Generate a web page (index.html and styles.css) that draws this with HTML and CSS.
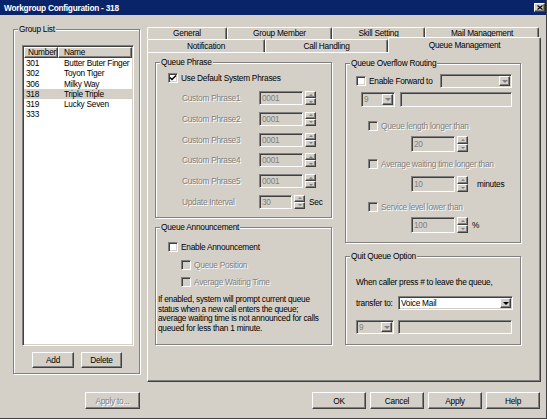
FILE: index.html
```html
<!DOCTYPE html>
<html lang="en">
<head>
    <meta charset="UTF-8">
    <title>Workgroup Configuration - 318</title>
    <link rel="stylesheet" href="styles.css">
</head>
<body>

<div class="window">
    <div class="titlebar">
        <span class="title">Workgroup Configuration - 318</span>
        <span class="close-btn">
            <svg width="6" height="5" viewBox="0 0 6 5"><path d="M0.5 0.5 L5.5 4.5 M5.5 0.5 L0.5 4.5" stroke="#000" stroke-width="1.2"/></svg>
        </span>
    </div>

    <div class="main">
        <!-- left: group list -->
        <div class="group group-list">
            <span class="group-title">Group List</span>
            <div class="listview">
                <div class="lv-header">
                    <span class="lv-head-cell lv-head-num">Number</span>
                    <span class="lv-head-cell lv-head-name">Name</span>
                </div>
                <div class="lv-row"><span class="lv-num">301</span><span class="lv-name">Butter Buter Finger</span></div>
                <div class="lv-row"><span class="lv-num">302</span><span class="lv-name">Toyon Tiger</span></div>
                <div class="lv-row"><span class="lv-num">306</span><span class="lv-name">Milky Way</span></div>
                <div class="lv-row selected"><span class="lv-num">318</span><span class="lv-name">Triple Triple</span></div>
                <div class="lv-row"><span class="lv-num">319</span><span class="lv-name">Lucky Seven</span></div>
                <div class="lv-row"><span class="lv-num">333</span><span class="lv-name"></span></div>
            </div>
            <div class="list-buttons">
                <span class="btn btn-add">Add</span>
                <span class="btn btn-delete">Delete</span>
            </div>
        </div>

        <!-- right: tabs -->
        <div class="tabs">
            <div class="tab-row tab-row-back">
                <span class="tab tab-general">General</span>
                <span class="tab tab-member">Group Member</span>
                <span class="tab tab-skill">Skill Setting</span>
                <span class="tab tab-mail">Mail Management</span>
            </div>
            <div class="tab-row tab-row-front">
                <span class="tab tab-notify">Notification</span>
                <span class="tab tab-call">Call Handling</span>
                <span class="tab tab-active">Queue Management</span>
            </div>

            <div class="panel">
                <div class="panel-col col-left">
                    <div class="group queue-phrase">
                        <span class="group-title">Queue Phrase</span>
                        <div class="check-row">
                            <span class="check"><svg width="8" height="8" viewBox="0 0 8 8"><path d="M1 3.5 L3 5.5 L7 1.5" fill="none" stroke="#000" stroke-width="1.5"/></svg></span>
                            <span>Use Default System Phrases</span>
                        </div>
                        <div class="field-row first">
                            <span class="field-label off">Custom Phrase1</span>
                            <span class="textbox disabled tb-phrase">0001</span>
                            <span class="spin"><span class="spin-btn"><i class="arrow-up"></i></span><span class="spin-btn"><i class="arrow-down"></i></span></span>
                        </div>
                        <div class="field-row">
                            <span class="field-label off">Custom Phrase2</span>
                            <span class="textbox disabled tb-phrase">0001</span>
                            <span class="spin"><span class="spin-btn"><i class="arrow-up"></i></span><span class="spin-btn"><i class="arrow-down"></i></span></span>
                        </div>
                        <div class="field-row">
                            <span class="field-label off">Custom Phrase3</span>
                            <span class="textbox disabled tb-phrase">0001</span>
                            <span class="spin"><span class="spin-btn"><i class="arrow-up"></i></span><span class="spin-btn"><i class="arrow-down"></i></span></span>
                        </div>
                        <div class="field-row">
                            <span class="field-label off">Custom Phrase4</span>
                            <span class="textbox disabled tb-phrase">0001</span>
                            <span class="spin"><span class="spin-btn"><i class="arrow-up"></i></span><span class="spin-btn"><i class="arrow-down"></i></span></span>
                        </div>
                        <div class="field-row">
                            <span class="field-label off">Custom Phrase5</span>
                            <span class="textbox disabled tb-phrase">0001</span>
                            <span class="spin"><span class="spin-btn"><i class="arrow-up"></i></span><span class="spin-btn"><i class="arrow-down"></i></span></span>
                        </div>
                        <div class="field-row">
                            <span class="field-label off">Update Interval</span>
                            <span class="textbox disabled tb-interval">30</span>
                            <span class="spin"><span class="spin-btn"><i class="arrow-up"></i></span><span class="spin-btn"><i class="arrow-down"></i></span></span>
                            <span class="unit-sec">Sec</span>
                        </div>
                    </div>

                    <div class="group queue-announce">
                        <span class="group-title">Queue Announcement</span>
                        <div class="check-row announce-main">
                            <span class="check"></span>
                            <span>Enable Announcement</span>
                        </div>
                        <div class="check-row announce-sub">
                            <span class="check disabled"></span>
                            <span class="off">Queue Position</span>
                        </div>
                        <div class="check-row announce-sub">
                            <span class="check disabled"></span>
                            <span class="off">Average Waiting Time</span>
                        </div>
                        <p class="announce-note">If enabled, system will prompt current queue<br>status when a new call enters the queue;<br>average waiting time is not announced for calls<br>queued for less than 1 minute.</p>
                    </div>
                </div>

                <div class="panel-col col-right">
                    <div class="group queue-overflow">
                        <span class="group-title">Queue Overflow Routing</span>
                        <div class="fwd-row">
                            <div class="check-row fwd-check">
                                <span class="check"></span>
                                <span>Enable Forward to</span>
                            </div>
                            <span class="dropdown disabled dd-forward">
                                <span class="dropdown-text"></span>
                                <span class="dropdown-btn"><i class="arrow-down-big"></i></span>
                            </span>
                        </div>
                        <div class="ext-row">
                            <span class="dropdown disabled dd-nine">
                                <span class="dropdown-text">9</span>
                                <span class="dropdown-btn"><i class="arrow-down-big"></i></span>
                            </span>
                            <span class="textbox disabled tb-ext"></span>
                        </div>

                        <div class="check-row overflow-check cb-length">
                            <span class="check disabled"></span>
                            <span class="off">Queue length longer than</span>
                        </div>
                        <div class="spin-row sr-length">
                            <span class="textbox disabled tb-limit">20</span>
                            <span class="spin tall"><span class="spin-btn"><i class="arrow-up"></i></span><span class="spin-btn"><i class="arrow-down"></i></span></span>
                        </div>

                        <div class="check-row overflow-check cb-wait">
                            <span class="check disabled"></span>
                            <span class="off">Average waiting time longer than</span>
                        </div>
                        <div class="spin-row sr-wait">
                            <span class="textbox disabled tb-limit">10</span>
                            <span class="spin tall"><span class="spin-btn"><i class="arrow-up"></i></span><span class="spin-btn"><i class="arrow-down"></i></span></span>
                            <span class="unit-minutes">minutes</span>
                        </div>

                        <div class="check-row overflow-check cb-service">
                            <span class="check disabled"></span>
                            <span class="off">Service level lower than</span>
                        </div>
                        <div class="spin-row sr-service">
                            <span class="textbox disabled tb-limit">100</span>
                            <span class="spin tall"><span class="spin-btn"><i class="arrow-up"></i></span><span class="spin-btn"><i class="arrow-down"></i></span></span>
                            <span class="unit-pct">%</span>
                        </div>
                    </div>

                    <div class="group quit-queue">
                        <span class="group-title">Quit Queue Option</span>
                        <div class="quit-text">When caller press # to leave the queue,</div>
                        <div class="transfer-row">
                            <span class="transfer-label">transfer to:</span>
                            <span class="dropdown dd-transfer">
                                <span class="dropdown-text">Voice Mail</span>
                                <span class="dropdown-btn"><i class="arrow-down-big"></i></span>
                            </span>
                        </div>
                        <div class="quit-ext-row">
                            <span class="dropdown disabled dd-quit-nine">
                                <span class="dropdown-text">9</span>
                                <span class="dropdown-btn"><i class="arrow-down-big"></i></span>
                            </span>
                            <span class="textbox disabled tb-quit-ext"></span>
                        </div>
                    </div>
                </div>
            </div>
        </div>
    </div>

    <div class="footer">
        <span class="btn btn-apply-to off">Apply to...</span>
        <div class="footer-right">
            <span class="btn btn-dialog">OK</span>
            <span class="btn btn-dialog">Cancel</span>
            <span class="btn btn-dialog">Apply</span>
            <span class="btn btn-dialog">Help</span>
        </div>
    </div>
</div>

</body>
</html>
```

FILE: styles.css
```css
body {
    margin: 0;
    background-color: #d4d0c8;
    font-family: "Liberation Sans", Arial, sans-serif;
    font-size: 8.3px;
    letter-spacing: -0.25px;
    line-height: 10px;
    color: #000;
}

.window {
    width: 547px;
    height: 419px;
    box-sizing: border-box;
    background-color: #d4d0c8;
    border-right: 1px solid #404040;
    border-bottom: 1px solid #404040;
}

/* title bar */
.titlebar {
    height: 15px;
    background-color: #0a246a;
    color: #fff;
    font-weight: bold;
    display: flex;
    align-items: center;
    justify-content: space-between;
    padding: 0 1px 0 4px;
}

.close-btn {
    width: 11px;
    height: 9px;
    box-sizing: border-box;
    background-color: #d4d0c8;
    border: 1px solid;
    border-color: #fff #404040 #404040 #fff;
    box-shadow: inset -1px -1px 0 #808080;
    display: flex;
    align-items: center;
    justify-content: center;
}

.main {
    display: flex;
    height: 367px;
}

/* common 3d pieces */
.group {
    position: relative;
    box-sizing: border-box;
    border: 1px solid #808080;
    box-shadow: 1px 1px 0 #fff, inset 1px 1px 0 #fff;
}

.group-title {
    position: absolute;
    top: -6px;
    left: 4px;
    padding: 0 1px;
    background-color: #d4d0c8;
    line-height: 10px;
    white-space: nowrap;
}

.btn {
    box-sizing: border-box;
    height: 16px;
    display: flex;
    align-items: center;
    justify-content: center;
    background-color: #d4d0c8;
    border: 1px solid;
    border-color: #fff #404040 #404040 #fff;
    box-shadow: inset -1px -1px 0 #808080;
}

.off {
    color: #808080;
    text-shadow: 1px 1px 0 #fff;
}

.textbox {
    display: block;
    box-sizing: border-box;
    height: 14px;
    padding-left: 2px;
    line-height: 12px;
    background-color: #fff;
    border: 1px solid;
    border-color: #808080 #fff #fff #808080;
    box-shadow: inset 1px 1px 0 #404040, inset -1px -1px 0 #d4d0c8;
}

.textbox.disabled {
    background-color: #d4d0c8;
    color: #808080;
}

.check {
    width: 10px;
    height: 10px;
    flex: none;
    box-sizing: border-box;
    background-color: #fff;
    border: 1px solid;
    border-color: #808080 #fff #fff #808080;
    box-shadow: inset 1px 1px 0 #404040, inset -1px -1px 0 #d4d0c8;
    display: flex;
    align-items: center;
    justify-content: center;
}

.check.disabled {
    background-color: #d4d0c8;
}

.check-row {
    display: flex;
    align-items: center;
    gap: 3px;
    height: 10px;
    white-space: nowrap;
}

.spin {
    display: flex;
    flex-direction: column;
    width: 11px;
    height: 14px;
    margin-left: 2px;
    flex: none;
}

.spin.tall {
    height: 16px;
}

.spin-btn {
    flex: 1;
    box-sizing: border-box;
    background-color: #d4d0c8;
    border: 1px solid;
    border-color: #fff #404040 #404040 #fff;
    box-shadow: inset -1px -1px 0 #808080;
    display: flex;
    align-items: center;
    justify-content: center;
}

.arrow-up {
    width: 0;
    height: 0;
    border-left: 2px solid transparent;
    border-right: 2px solid transparent;
    border-bottom: 2px solid #808080;
}

.arrow-down {
    width: 0;
    height: 0;
    border-left: 2px solid transparent;
    border-right: 2px solid transparent;
    border-top: 2px solid #808080;
}

.dropdown {
    display: flex;
    box-sizing: border-box;
    height: 14px;
    padding: 1px;
    background-color: #fff;
    border: 1px solid;
    border-color: #808080 #fff #fff #808080;
    box-shadow: inset 1px 1px 0 #404040, inset -1px -1px 0 #d4d0c8;
}

.dropdown.disabled {
    background-color: #d4d0c8;
    color: #808080;
}

.dropdown-text {
    flex: 1;
    padding-left: 1px;
    line-height: 10px;
    white-space: nowrap;
}

.dropdown-btn {
    width: 11px;
    box-sizing: border-box;
    background-color: #d4d0c8;
    border: 1px solid;
    border-color: #fff #404040 #404040 #fff;
    box-shadow: inset -1px -1px 0 #808080;
    display: flex;
    align-items: center;
    justify-content: center;
}

.arrow-down-big {
    width: 0;
    height: 0;
    border-left: 3px solid transparent;
    border-right: 3px solid transparent;
    border-top: 3px solid #000;
}

.dropdown.disabled .arrow-down-big {
    border-top-color: #808080;
}

/* group list */
.group-list {
    width: 127px;
    height: 345px;
    margin: 14px 0 0 13px;
    padding: 15px 0 0 8px;
}

.listview {
    width: 112px;
    height: 301px;
    box-sizing: border-box;
    padding: 1px;
    background-color: #fff;
    border: 1px solid;
    border-color: #808080 #fff #fff #808080;
    box-shadow: inset 1px 1px 0 #404040, inset -1px -1px 0 #d4d0c8;
    overflow: hidden;
}

.lv-header {
    display: flex;
    height: 11px;
}

.lv-head-cell {
    box-sizing: border-box;
    background-color: #d4d0c8;
    border-top: 1px solid #fff;
    border-left: 1px solid #fff;
    border-right: 1px solid #404040;
    border-bottom: 1px solid #404040;
    box-shadow: inset -1px -1px 0 #808080;
    line-height: 9px;
    white-space: nowrap;
    overflow: hidden;
}

.lv-head-num {
    width: 34px;
    padding-left: 3px;
}

.lv-head-name {
    flex: 1;
    padding-left: 5px;
}

.lv-row {
    display: flex;
    height: 10.3px;
    line-height: 10.3px;
    white-space: nowrap;
}

.lv-row.selected {
    background-color: #d4d0c8;
}

.lv-num {
    width: 34px;
    flex: none;
    box-sizing: border-box;
    padding-left: 2px;
}

.lv-name {
    padding-left: 6px;
}

.list-buttons {
    display: flex;
    gap: 7px;
    margin: 6px 0 0 10px;
}

.btn-add {
    width: 42px;
}

.btn-delete {
    width: 41px;
}

/* tabs */
.tabs {
    width: 394px;
    margin: 12px 0 0 7px;
    display: flex;
    flex-direction: column;
}

.tab-row {
    display: flex;
}

.tab {
    box-sizing: border-box;
    text-align: center;
    white-space: nowrap;
    background-color: #d4d0c8;
    border-top: 1px solid #fff;
    border-left: 1px solid #fff;
    border-right: 1px solid #404040;
    box-shadow: inset -1px 0 0 #808080;
    border-radius: 2px 2px 0 0;
}

.tab-row-back .tab {
    height: 12px;
    line-height: 11px;
}

.tab-row-front .tab {
    height: 13px;
    line-height: 12px;
}

.tab-general { width: 80px; }
.tab-member { width: 105px; }
.tab-skill { width: 93px; }
.tab-mail { width: 114px; }
.tab-notify { width: 118px; }
.tab-call { width: 123px; }

.tab-row-front .tab-active {
    width: 153px;
    height: 16px;
    line-height: 14px;
    margin-top: -2px;
    margin-bottom: -1px;
    position: relative;
    z-index: 1;
}

.panel {
    box-sizing: border-box;
    height: 330px;
    border: 1px solid;
    border-color: #fff #404040 #404040 #fff;
    box-shadow: inset -1px -1px 0 #808080;
    display: flex;
    gap: 13px;
    padding: 9px 0 0 7px;
}

.panel-col {
    display: flex;
    flex-direction: column;
}

.col-left {
    width: 177px;
}

.col-right {
    width: 176px;
    margin-top: 1px;
}

/* queue phrase */
.queue-phrase {
    height: 156px;
    padding: 10px 0 0 12px;
}

.field-row {
    display: flex;
    align-items: center;
    height: 14px;
    margin-top: 6.8px;
    padding-left: 14px;
    white-space: nowrap;
}

.field-row.first {
    margin-top: 8px;
}

.field-label {
    width: 77px;
    flex: none;
}

.tb-phrase {
    width: 44px;
}

.tb-interval {
    width: 33px;
}

.unit-sec {
    margin-left: 4px;
}

/* queue announcement */
.queue-announce {
    height: 118px;
    margin-top: 9px;
    padding: 14px 0 0 2px;
}

.announce-main {
    margin-left: 10px;
}

.announce-sub {
    margin: 7.5px 0 0 23px;
}

.announce-note {
    margin: 8px 0 0 0;
    line-height: 9.5px;
    white-space: nowrap;
}

/* queue overflow routing */
.queue-overflow {
    height: 180px;
    padding: 10px 0 0 10px;
}

.fwd-row {
    display: flex;
    align-items: center;
    height: 14px;
}

.fwd-check {
    width: 84px;
}

.dd-forward {
    width: 72px;
}

.ext-row {
    display: flex;
    margin-top: 4px;
    padding-left: 5px;
}

.dd-nine {
    width: 34px;
    height: 15px;
}

.tb-ext {
    width: 112px;
    height: 15px;
    margin-left: 5px;
}

.overflow-check {
    margin-left: 12px;
}

.cb-length { margin-top: 14px; }
.cb-wait { margin-top: 7px; }
.cb-service { margin-top: 10px; }

.spin-row {
    display: flex;
    align-items: center;
    height: 16px;
    padding-left: 55px;
}

.sr-length { margin-top: 5px; }
.sr-wait { margin-top: 7px; }
.sr-service { margin-top: 5px; }

.tb-limit {
    width: 44px;
    height: 16px;
    line-height: 14px;
}

.unit-minutes {
    margin-left: 9px;
}

.unit-pct {
    margin-left: 4px;
}

/* quit queue option */
.quit-queue {
    height: 89px;
    margin-top: 13px;
    padding: 20px 0 0 10px;
}

.quit-text {
    white-space: nowrap;
}

.transfer-row {
    display: flex;
    align-items: center;
    margin-top: 9px;
}

.transfer-label {
    width: 42px;
    flex: none;
}

.dd-transfer {
    width: 115px;
}

.quit-ext-row {
    display: flex;
    margin-top: 10px;
}

.dd-quit-nine {
    width: 38px;
}

.tb-quit-ext {
    width: 114px;
    margin-left: 4px;
}

/* footer buttons */
.footer {
    display: flex;
    height: 17px;
    margin-top: 10px;
}

.footer .btn {
    height: 17px;
}

.btn-apply-to {
    width: 55px;
    margin-left: 85px;
}

.footer-right {
    display: flex;
    gap: 4px;
    margin-left: auto;
    margin-right: 6px;
}

.btn-dialog {
    width: 54px;
}
```
